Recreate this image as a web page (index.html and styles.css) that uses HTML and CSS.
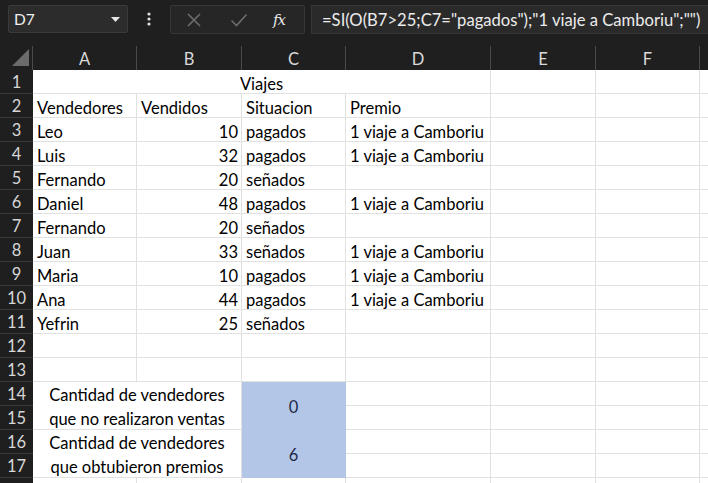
FILE: index.html
```html
<!DOCTYPE html>
<html lang="es">
<head>
<meta charset="utf-8">
<title>Viajes</title>
<link rel="stylesheet" href="styles.css">
</head>
<body>
<div class="app">
  <div class="topbar">
    <div class="namebox">
      <span class="ref">D7</span>
      <svg class="dd" width="9" height="5" viewBox="0 0 9 5"><path d="M0 0H9L4.5 5Z" fill="#e6e6e6"/></svg>
    </div>
    <div class="grip">
      <svg width="4" height="14" viewBox="0 0 4 14"><circle cx="2" cy="2" r="1.6" fill="#e0e0e0"/><circle cx="2" cy="7" r="1.6" fill="#e0e0e0"/><circle cx="2" cy="12" r="1.6" fill="#e0e0e0"/></svg>
    </div>
    <div class="btnbox">
      <svg class="ico" width="16" height="16" viewBox="0 0 16 16"><path d="M2 2L14 14M14 2L2 14" stroke="#6c6c6c" stroke-width="1.6" fill="none"/></svg>
      <svg class="ico" width="18" height="16" viewBox="0 0 18 16"><path d="M1.5 8.5L6.5 13.5L16.5 2.5" stroke="#6c6c6c" stroke-width="1.6" fill="none"/></svg>
      <span class="fx">fx</span>
    </div>
    <div class="formula">=SI(O(B7&gt;25;C7="pagados");"1 viaje a Camboriu";"")</div>
  </div>

  <div class="sheet">
    <div class="corner"><svg width="17" height="17" viewBox="0 0 17 17"><path d="M17 0V17H0Z" fill="#6b6b6b"/></svg></div>
    <div class="ch">A</div><div class="ch">B</div><div class="ch">C</div><div class="ch">D</div><div class="ch">E</div><div class="ch">F</div><div class="ch last"></div>

    <div class="rh">1</div><div class="c span4 center">Viajes</div><div class="c"></div><div class="c"></div><div class="c"></div>
    <div class="rh">2</div><div class="c">Vendedores</div><div class="c">Vendidos</div><div class="c">Situacion</div><div class="c">Premio</div><div class="c"></div><div class="c"></div><div class="c"></div>
    <div class="rh">3</div><div class="c">Leo</div><div class="c num">10</div><div class="c">pagados</div><div class="c">1 viaje a Camboriu</div><div class="c"></div><div class="c"></div><div class="c"></div>
    <div class="rh">4</div><div class="c">Luis</div><div class="c num">32</div><div class="c">pagados</div><div class="c">1 viaje a Camboriu</div><div class="c"></div><div class="c"></div><div class="c"></div>
    <div class="rh">5</div><div class="c">Fernando</div><div class="c num">20</div><div class="c">señados</div><div class="c"></div><div class="c"></div><div class="c"></div><div class="c"></div>
    <div class="rh">6</div><div class="c">Daniel</div><div class="c num">48</div><div class="c">pagados</div><div class="c">1 viaje a Camboriu</div><div class="c"></div><div class="c"></div><div class="c"></div>
    <div class="rh">7</div><div class="c">Fernando</div><div class="c num">20</div><div class="c">señados</div><div class="c"></div><div class="c"></div><div class="c"></div><div class="c"></div>
    <div class="rh">8</div><div class="c">Juan</div><div class="c num">33</div><div class="c">señados</div><div class="c">1 viaje a Camboriu</div><div class="c"></div><div class="c"></div><div class="c"></div>
    <div class="rh">9</div><div class="c">Maria</div><div class="c num">10</div><div class="c">pagados</div><div class="c">1 viaje a Camboriu</div><div class="c"></div><div class="c"></div><div class="c"></div>
    <div class="rh">10</div><div class="c">Ana</div><div class="c num">44</div><div class="c">pagados</div><div class="c">1 viaje a Camboriu</div><div class="c"></div><div class="c"></div><div class="c"></div>
    <div class="rh">11</div><div class="c">Yefrin</div><div class="c num">25</div><div class="c">señados</div><div class="c"></div><div class="c"></div><div class="c"></div><div class="c"></div>
    <div class="rh">12</div><div class="c"></div><div class="c"></div><div class="c"></div><div class="c"></div><div class="c"></div><div class="c"></div><div class="c"></div>
    <div class="rh">13</div><div class="c"></div><div class="c"></div><div class="c"></div><div class="c"></div><div class="c"></div><div class="c"></div><div class="c"></div>
    <div class="rh">14</div><div class="c label">Cantidad de vendedores<br>que no realizaron ventas</div><div class="c blue">0</div><div class="c"></div><div class="c"></div><div class="c"></div><div class="c"></div>
    <div class="rh">15</div><div class="c"></div><div class="c"></div><div class="c"></div><div class="c"></div>
    <div class="rh">16</div><div class="c label">Cantidad de vendedores<br>que obtubieron premios</div><div class="c blue">6</div><div class="c"></div><div class="c"></div><div class="c"></div><div class="c"></div>
    <div class="rh">17</div><div class="c"></div><div class="c"></div><div class="c"></div><div class="c"></div>
    <div class="rh"></div><div class="c"></div><div class="c"></div><div class="c"></div><div class="c"></div><div class="c"></div><div class="c"></div><div class="c"></div>
  </div>
</div>
</body>
</html>
```

FILE: styles.css
```css
* { box-sizing: border-box; }
html, body { margin: 0; padding: 0; }
body {
  background: #1f1f1f;
  font-family: Lato, "Open Sans", sans-serif;
  width: 708px;
  height: 483px;
  overflow: hidden;
}
.app { width: 708px; height: 483px; overflow: hidden; }

.topbar {
  height: 46px;
  display: flex;
  align-items: flex-start;
  padding-top: 5px;
  background: #1f1f1f;
}
.namebox {
  margin-left: 8px;
  width: 120px;
  height: 28px;
  background: #2c2c2c;
  border: 1px solid #3a3a3a;
  border-radius: 2px;
  display: flex;
  align-items: center;
  justify-content: space-between;
  padding: 0 7px 0 5px;
  color: #f0f0f0;
  font-size: 15.5px;
}
.grip {
  width: 42px;
  height: 28px;
  display: flex;
  align-items: center;
  justify-content: center;
}
.btnbox {
  width: 135px;
  height: 29px;
  background: #262626;
  border: 1px solid #363636;
  border-radius: 2px;
  display: flex;
  align-items: center;
  padding-left: 15px;
}
.btnbox .ico:first-child { margin-right: 28px; }
.btnbox .ico:nth-child(2) { margin-right: 25px; }
.fx {
  font-family: "DejaVu Serif", "Liberation Serif", serif;
  font-style: italic;
  color: #e8e8e8;
  font-size: 15px;
  letter-spacing: -1px;
}
.formula {
  margin-left: 6px;
  flex: 1;
  height: 29px;
  background: #2a2a2a;
  border: 1px solid #363636;
  border-right: none;
  display: flex;
  align-items: center;
  padding-left: 10px;
  color: #ececec;
  font-size: 16.6px;
  white-space: nowrap;
  overflow: hidden;
}

.sheet {
  display: grid;
  grid-template-columns: 33px 104px 105px 104px 145px 105px 104px 1fr;
  grid-template-rows: 24px repeat(18, 24px);
  font-size: 16.5px;
}
.corner {
  background: #1f1f1f;
  border-right: 1px solid #4a4a4a;
  display: flex;
  align-items: flex-end;
  justify-content: flex-end;
  padding: 0 3px 4px 0;
}
.ch {
  background: #1f1f1f;
  color: #dadada;
  border-right: 1px solid #4a4a4a;
  display: flex;
  align-items: center;
  justify-content: center;
  padding-top: 2px;
}
.ch.last { border-right: none; }
.rh {
  background: #1f1f1f;
  color: #d6d6d6;
  border-bottom: 1px solid #3a3a3a;
  display: flex;
  align-items: center;
  justify-content: center;
}
.c {
  background: #ffffff;
  color: #000;
  border-right: 1px solid #e1e1e1;
  border-bottom: 1px solid #e1e1e1;
  display: flex;
  align-items: flex-end;
  line-height: 16px;
  padding: 0 4px 1px 4px;
  white-space: nowrap;
  overflow: visible;
}
.num { justify-content: flex-end; padding-right: 3px; }
.span4 { grid-column: span 4; }
.center { justify-content: center; }
.label {
  grid-column: span 2;
  grid-row: span 2;
  align-items: center;
  justify-content: center;
  text-align: center;
  line-height: 24px;
  padding: 3px 0 0 0;
}
.blue {
  grid-row: span 2;
  background: #b4c6e7;
  border-color: #b4c6e7;
  color: #1c2b4a;
  align-items: center;
  justify-content: center;
  padding: 3px 0 0 0;
}
```
